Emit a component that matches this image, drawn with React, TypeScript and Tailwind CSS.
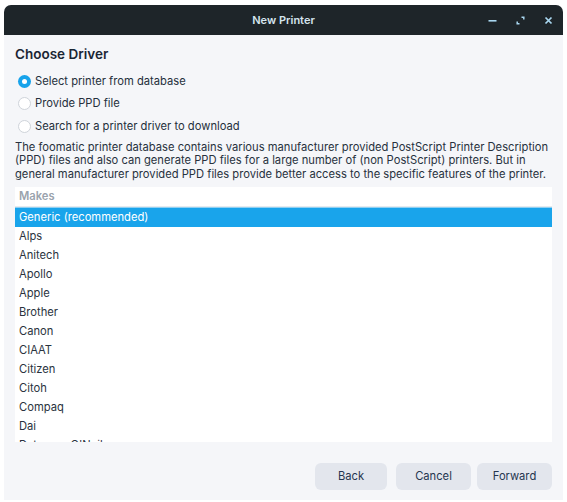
import React from "react";

const makes = [
  "Alps",
  "Anitech",
  "Apollo",
  "Apple",
  "Brother",
  "Canon",
  "CIAAT",
  "Citizen",
  "Citoh",
  "Compaq",
  "Dai",
  "Datamax-O'Neil",
  "Datasouth",
];

function Radio({ checked, label }: { checked?: boolean; label: string }) {
  return (
    <label className="flex items-center gap-[4px] h-[22.5px] pl-[3px]">
      {checked ? (
        <span className="w-[13px] h-[13px] rounded-full bg-[#17a3eb] flex items-center justify-center">
          <span className="w-[5px] h-[5px] rounded-full bg-white" />
        </span>
      ) : (
        <span className="w-[13px] h-[13px] rounded-full bg-white border border-[#cfd4da]" />
      )}
      <span>{label}</span>
    </label>
  );
}

export default function App() {
  return (
    <div
      className="w-full h-[502px] bg-white pt-[5px] pl-[4px]"
      style={{ fontFamily: "Inter, 'Noto Sans', sans-serif" }}
    >
      <div className="w-[559px] h-[495px] rounded-t-[7px] overflow-hidden flex flex-col bg-[#f5f6f9]">
        {/* title bar */}
        <div className="h-[30px] bg-[#1e2529] flex items-center relative shrink-0">
          <div className="flex-1 text-center text-[11px] font-semibold text-[#d5e4ee]">
            New Printer
          </div>
          <div className="absolute right-[10px] top-0 h-full flex items-center gap-[19px] text-[#a9d7f0]">
            <svg width="9" height="9" viewBox="0 0 9 9">
              <rect x="0.5" y="4" width="8" height="1.6" fill="currentColor" />
            </svg>
            <svg width="9" height="9" viewBox="0 0 9 9" fill="none" stroke="currentColor" strokeWidth="1.5">
              <path d="M5.5 1.2h2.3v2.3" />
              <path d="M3.5 7.8H1.2V5.5" />
            </svg>
            <svg width="9" height="9" viewBox="0 0 9 9" stroke="currentColor" strokeWidth="1.7">
              <path d="M1.5 1.5l6 6M7.5 1.5l-6 6" />
            </svg>
          </div>
        </div>

        {/* body */}
        <div className="flex-1 flex flex-col px-[11px] text-[11.2px] text-[#25303c]">
          <h1 className="text-[13.5px] font-semibold text-[#1a2534] mt-[9px] h-[20px] leading-[20px]">
            Choose Driver
          </h1>
          <div className="mt-[6px] flex flex-col">
            <Radio checked label="Select printer from database" />
            <Radio label="Provide PPD file" />
            <Radio label="Search for a printer driver to download" />
          </div>
          <p className="mt-[3px] leading-[13.5px] text-[#28323e]">
            The foomatic printer database contains various manufacturer provided PostScript Printer Description
            (PPD) files and also can generate PPD files for a large number of (non PostScript) printers. But in
            general manufacturer provided PPD files provide better access to the specific features of the printer.
          </p>

          <div className="mt-[6px] h-[255px] bg-white overflow-hidden flex flex-col">
            <div className="h-[20px] shrink-0 flex items-center px-[4px] font-semibold text-[#9aa3ad] border-b border-[#e6eaee]">
              Makes
            </div>
            <div className="h-[20px] shrink-0 flex items-center px-[4px] bg-[#19a4eb] text-white border-t border-[#8fd0f3]">
              Generic (recommended)
            </div>
            {makes.map((m) => (
              <div key={m} className="h-[19px] shrink-0 flex items-center px-[4px] text-[#2a333e]">
                {m}
              </div>
            ))}
          </div>

          <div className="mt-auto mb-[10px] flex justify-end">
            <button className="w-[72px] h-[27px] rounded-[6px] bg-[#e3e6ed] text-[#263650]">Back</button>
            <button className="w-[75px] h-[27px] rounded-[6px] bg-[#e3e6ed] text-[#263650] ml-[9px]">Cancel</button>
            <button className="w-[75px] h-[27px] rounded-[6px] bg-[#e3e6ed] text-[#263650] ml-[6px]">Forward</button>
          </div>
        </div>
      </div>
    </div>
  );
}
